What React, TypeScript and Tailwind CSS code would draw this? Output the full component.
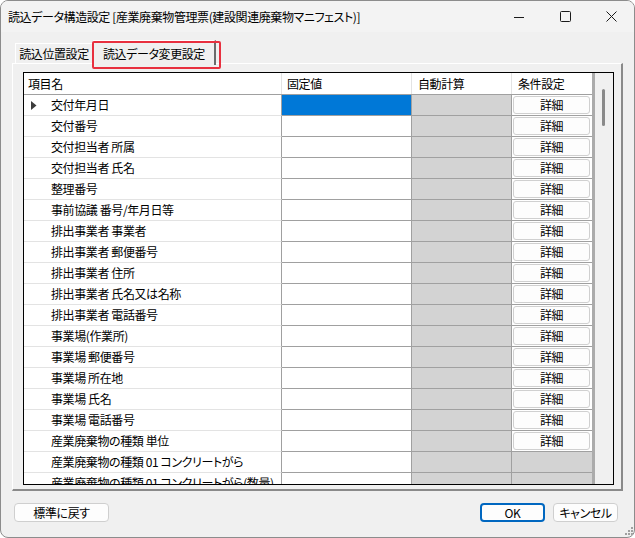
import React from 'react'

const ITEMS = [
  '交付年月日',
  '交付番号',
  '交付担当者 所属',
  '交付担当者 氏名',
  '整理番号',
  '事前協議 番号/年月日等',
  '排出事業者 事業者',
  '排出事業者 郵便番号',
  '排出事業者 住所',
  '排出事業者 氏名又は名称',
  '排出事業者 電話番号',
  '事業場(作業所)',
  '事業場 郵便番号',
  '事業場 所在地',
  '事業場 氏名',
  '事業場 電話番号',
  '産業廃棄物の種類 単位',
  '産業廃棄物の種類 01 コンクリートがら',
  '産業廃棄物の種類 01 コンクリートがら(数量)',
]

// 詳細ボタンがある行数
const DETAIL_ROWS = 17

function TitleControls() {
  return (
    <div className="flex h-full">
      <div className="w-[46px] h-full flex items-center justify-center">
        <svg width="10" height="10" viewBox="0 0 10 10">
          <path d="M0 5.5h10" stroke="#1a1a1a" strokeWidth="1" />
        </svg>
      </div>
      <div className="w-[46px] h-full flex items-center justify-center">
        <svg width="11" height="11" viewBox="0 0 11 11">
          <rect x="0.5" y="0.5" width="10" height="10" rx="1" fill="none" stroke="#1a1a1a" strokeWidth="1" />
        </svg>
      </div>
      <div className="w-[46px] h-full flex items-center justify-center">
        <svg width="11" height="11" viewBox="0 0 11 11">
          <path d="M0.5 0.5l10 10M10.5 0.5l-10 10" stroke="#1a1a1a" strokeWidth="1" />
        </svg>
      </div>
    </div>
  )
}

function Row({ label, index }: { label: string; index: number }) {
  const hasButton = index < DETAIL_ROWS
  return (
    <div className="flex h-[21px] shrink-0">
      <div className="w-[258px] flex items-center bg-white border-r border-r-[#a0a0a0] border-b border-b-[#e3e3e3] overflow-hidden">
        <div className="w-[27px] shrink-0 flex items-center pl-[7px]">
          {index === 0 && (
            <svg width="6" height="9" viewBox="0 0 6 9">
              <path d="M0 0l5.5 4.5L0 9z" fill="#3c3c3c" />
            </svg>
          )}
        </div>
        <span className="whitespace-nowrap">{label}</span>
      </div>
      <div
        className={`w-[130px] border-r border-b border-[#a0a0a0] ${
          index === 0 ? 'bg-[#0078d7]' : 'bg-white'
        }`}
      />
      <div className="w-[100px] bg-[#d3d3d3] border-r border-b border-[#a0a0a0]" />
      <div
        className={`w-[80px] border-b border-[#a0a0a0] flex ${
          hasButton ? 'bg-white pl-[1px] pr-[2px] py-[1px]' : 'bg-[#d3d3d3]'
        }`}
      >
        {hasButton && (
          <div className="flex-1 flex items-center justify-center rounded-[3px] border border-[#d0d0d0] bg-[#fdfdfd]">
            詳細
          </div>
        )}
      </div>
    </div>
  )
}

function DataGrid() {
  return (
    <div className="w-[591px] h-[413px] border border-black flex overflow-hidden">
      <div className="w-[568px] flex flex-col overflow-hidden">
        {/* ヘッダー */}
        <div className="flex h-[22px] shrink-0 bg-white border-b border-[#a0a0a0]">
          <div className="w-[258px] flex items-center pl-[4px] border-r border-[#e3e3e3]">項目名</div>
          <div className="w-[130px] flex items-center pl-[5px] border-r border-[#e3e3e3]">固定値</div>
          <div className="w-[100px] flex items-center pl-[6px] border-r border-[#e3e3e3]">自動計算</div>
          <div className="w-[80px] flex items-center pl-[6px]">条件設定</div>
        </div>
        {ITEMS.map((label, i) => (
          <Row key={label} label={label} index={i} />
        ))}
      </div>
      <div className="w-[3px] bg-[#ababab]" />
      <div className="w-[17px] bg-[#f0f0f0] flex flex-col items-center pt-[16px]">
        <div className="w-[3px] h-[37px] rounded-full bg-[#8a8a8a]" />
      </div>
    </div>
  )
}

export default function App() {
  return (
    <div className="w-[635px] h-[538px] bg-[#f0f0f0] border border-[#8c8c8c] rounded-[8px] overflow-hidden flex flex-col text-[12px] tracking-[-0.4px] [font-feature-settings:'palt'] text-black font-['Noto_Sans_CJK_JP','Noto_Sans',sans-serif] leading-none">
      {/* タイトルバー */}
      <div className="h-[31px] shrink-0 bg-[#f3f3f3] flex items-center justify-between pl-[7px]">
        <span className="whitespace-nowrap">読込データ構造設定 [産業廃棄物管理票(建設関連廃棄物マニフェスト)]</span>
        <TitleControls />
      </div>

      <div className="flex flex-col pl-[11px]">
        {/* タブ */}
        <div className="relative h-[31px] flex items-end pl-[3px]">
          <div className="w-[78px] h-[20px] flex items-center justify-center border-t border-l border-white border-r border-r-[#d0d0d0] bg-[#f0f0f0]">
            読込位置設定
          </div>
          <div className="relative z-10 w-[123px] h-[25px] -mb-[2px] flex items-center justify-center bg-[#f0f0f0] border-t border-l border-white border-r-2 border-r-[#6b6b6b] pt-[1px]">
            読込データ変更設定
          </div>
          {/* 赤枠 */}
          <div className="absolute z-20 left-[80px] top-[9px] w-[129px] h-[28px] border-2 border-[#e8303f] rounded-[2px]" />
        </div>

        {/* タブパネル */}
        <div className="w-[611px] h-[428px] border-t border-l border-white border-r-2 border-b-2 border-r-[#8a8a8a] border-b-[#8a8a8a] pl-[10px] pt-[8px]">
          <DataGrid />
        </div>
      </div>

      {/* 下部ボタン */}
      <div className="relative flex-1 flex items-start pt-[12px] pl-[13px] pr-[16px]">
        <div className="w-[95px] h-[19px] flex items-center justify-center rounded-[4px] border border-[#cfcfcf] bg-[#fdfdfd]">
          標準に戻す
        </div>
        <div className="flex-1" />
        <div className="w-[65px] h-[19px] flex items-center justify-center rounded-[4px] border-2 border-[#0067c0] bg-[#fdfdfd]">
          OK
        </div>
        <div className="w-[65px] h-[19px] ml-[8px] flex items-center justify-center rounded-[4px] border border-[#cfcfcf] bg-[#fdfdfd]">
          キャンセル
        </div>
        {/* サイズ変更グリップ */}
        <svg className="absolute right-[1px] bottom-[2px]" width="9" height="9" viewBox="0 0 9 9">
          <rect x="7" y="1" width="2" height="2" fill="#a0a0a0" />
          <rect x="4" y="4" width="2" height="2" fill="#a0a0a0" />
          <rect x="7" y="4" width="2" height="2" fill="#a0a0a0" />
          <rect x="1" y="7" width="2" height="2" fill="#a0a0a0" />
          <rect x="4" y="7" width="2" height="2" fill="#a0a0a0" />
          <rect x="7" y="7" width="2" height="2" fill="#a0a0a0" />
        </svg>
      </div>
    </div>
  )
}
